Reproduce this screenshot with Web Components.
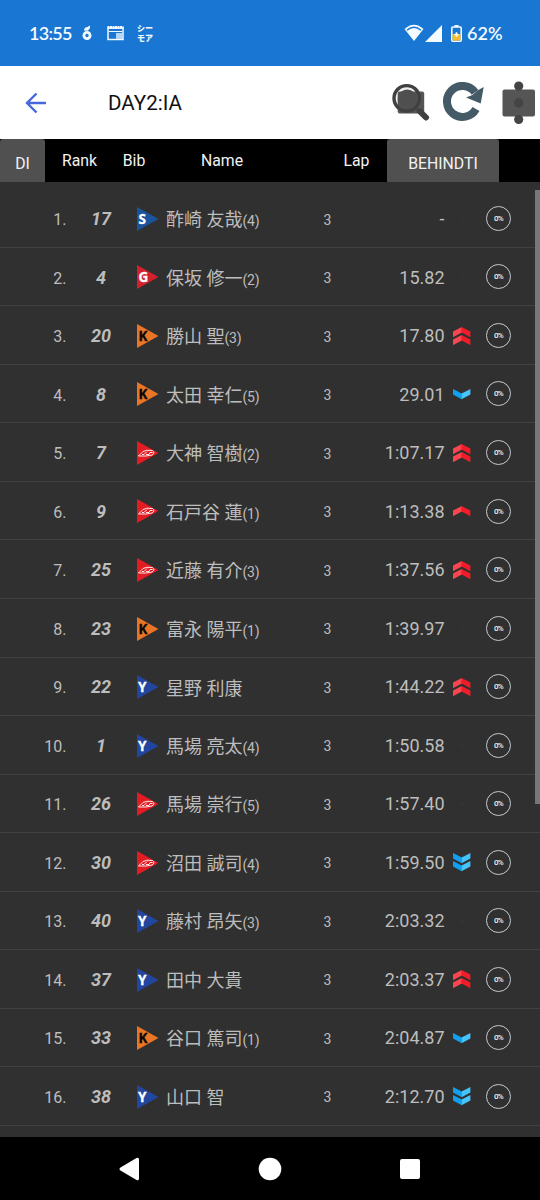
<!DOCTYPE html>
<html lang="ja">
<head>
<meta charset="utf-8">
<title>DAY2:IA</title>
<style>
    body {
        margin: 0;
        width: 540px;
        height: 1200px;
        overflow: hidden;
        background: #303030;
        font-family: Roboto, "Noto Sans CJK JP", sans-serif;
    }
</style>
</head>
<body>
<live-app></live-app>

<script>
class StatusBar extends HTMLElement {
    constructor() {
        super();
        this.shadow = this.attachShadow({mode: 'open'});
    }

    connectedCallback() {
        this.shadow.innerHTML = `
            <style>
                :host {
                    display: flex;
                    align-items: center;
                    justify-content: space-between;
                    box-sizing: border-box;
                    height: 66px;
                    padding: 0 37px 0 29px;
                    background: #1976d2;
                    color: #f4faff;
                    font-family: Lato, sans-serif;
                    font-weight: 600;
                }

                .group {
                    display: flex;
                    align-items: center;
                }

                .time {
                    font-size: 18px;
                    width: 53px;
                    letter-spacing: -0.7px;
                }

                .app {
                    display: flex;
                    flex-direction: column;
                    font: 900 8px/10px "Noto Sans CJK JP", sans-serif;
                    margin-left: 13px;
                }

                .percent {
                    font-size: 18px;
                    margin-left: 5px;
                    width: 36px;
                    white-space: nowrap;
                }

                svg {
                    display: block;
                }
            </style>

            <span class="group">
                <span class="time">13:55</span>
                <svg width="10" height="16" viewBox="0 0 10 16">
                    <circle cx="5" cy="10.500" r="3.100" fill="none" stroke="currentColor" stroke-width="2.800"/>
                    <path d="M2 5.500Q2.500 2 5 2.300L8 .500Q8.500 4 5.500 5.800Z" fill="currentColor"/>
                </svg>
                <svg width="17" height="16" viewBox="0 0 17 16" style="margin-left:15px">
                    <path d="M1 3H16V14.500H1Z" fill="none" stroke="currentColor" stroke-width="1.500"/>
                    <path d="M.500 2.500H16.500" stroke="currentColor" stroke-width="3" stroke-dasharray="2 .5"/>
                    <path d="M2 6.500H15" stroke="currentColor"/>
                    <path d="M9 8H15V14H9Z" fill="#b5d5f4"/>
                </svg>
                <span class="app"><span>シー</span><span>モア</span></span>
            </span>

            <span class="group">
                <svg width="20" height="18" viewBox="0 0 20 18">
                    <path d="M.500 5 Q10 -3.500 19.500 5 L10 17Z" fill="currentColor"/>
                    <path d="M3 6.200 Q10 .300 17 6.200" fill="none" stroke="#1976d2" stroke-width="1.400"/>
                </svg>
                <svg width="17" height="17" viewBox="0 0 17 17" style="margin-left:1px">
                    <path d="M0 17L17 0V17Z" fill="currentColor"/>
                </svg>
                <svg width="11" height="17" viewBox="0 0 11 17" style="margin-left:9px">
                    <path d="M3.500 0H7.500V2H3.500Z" fill="currentColor"/>
                    <rect x=".8" y="2" width="9.400" height="14.200" rx="1" fill="#1976d2" stroke="currentColor" stroke-width="1.600"/>
                    <path d="M1.500 9H9.500V15.500H1.500Z" fill="#fbbc2c"/>
                    <path d="M5.500 7.300V11.700M3.500 9.500H7.500" stroke="#fff" stroke-width="1.600"/>
                </svg>
                <span class="percent">62%</span>
            </span>
        `;
    }
}

class TitleBar extends HTMLElement {
    constructor() {
        super();
        this.shadow = this.attachShadow({mode: 'open'});
    }

    connectedCallback() {
        this.shadow.innerHTML = `
            <style>
                :host {
                    display: grid;
                    grid-template-columns: 83px 284px 38px 13px 42px 17px 34px;
                    align-items: center;
                    box-sizing: border-box;
                    height: 73px;
                    padding-left: 25px;
                    background: #fff;
                    color: #111;
                }

                .title {
                    font-size: 20.6px;
                    padding-top: 1px;
                }

                svg {
                    display: block;
                }
            </style>

            <svg width="22" height="22" viewBox="0 0 22 22" fill="none" stroke="#4569dc" stroke-width="2.400">
                <path d="M21 11H2M11.500 1.500L2 11L11.500 20.500"/>
            </svg>
            <span class="title"><slot></slot></span>
            <svg width="38" height="40" viewBox="0 0 38 40">
                <circle cx="14.700" cy="15.300" r="13" fill="#eee"/>
                <rect x="5.700" y="8.500" width="26.500" height="22" rx="2" fill="#555"/>
                <circle cx="15.200" cy="16" r="9.500" fill="#4f4f4f"/>
                <circle cx="14.700" cy="15.300" r="12.700" fill="none" stroke="#404040" stroke-width="3.400"/>
                <path d="M25 26L27 28" stroke="#404040" stroke-width="3"/>
                <path d="M28 28.500L34 34.500" stroke="#404040" stroke-width="6" stroke-linecap="round"/>
            </svg>
            <span></span>
            <svg width="42" height="42" viewBox="0 0 42 42">
                <path d="M32 10.300A15.500 15.500 0 1 0 33 27" fill="none" stroke="#445a66" stroke-width="8"/>
                <path d="M40.700 5L37.700 21.500L23 15.500L29.500 13L34.500 8.500Z" fill="#445a66"/>
            </svg>
            <span></span>
            <svg width="34" height="44" viewBox="0 0 34 44">
                <rect x=".5" y="8.500" width="32.500" height="27" rx="2" fill="#555"/>
                <g fill="#444">
                    <circle cx="16.700" cy="5" r="4.600"/>
                    <circle cx="16.700" cy="22" r="4.700"/>
                    <circle cx="16.700" cy="38.500" r="4.600"/>
                </g>
            </svg>
        `;
    }
}

class TableHead extends HTMLElement {
    constructor() {
        super();
        this.shadow = this.attachShadow({mode: 'open'});
    }

    connectedCallback() {
        this.shadow.innerHTML = `
            <style>
                :host {
                    display: grid;
                    grid-template-columns: 45px 69px 40px 136px 97px 112px;
                    height: 42.5px;
                    background: #000;
                    color: #f2f2f2;
                    font-size: 15.8px;
                    line-height: 44px;
                    text-align: center;
                }

                .button {
                    background: #505050;
                    border-radius: 3px;
                    line-height: 49px;
                }

                .lap {
                    text-align: right;
                    padding-right: 17.5px;
                }
            </style>

            <span class="button">DI</span>
            <span>Rank</span>
            <span>Bib</span>
            <span>Name</span>
            <span class="lap">Lap</span>
            <span class="button">BEHINDTI</span>
        `;
    }
}

class TeamFlag extends HTMLElement {
    constructor() {
        super();
        this.shadow = this.attachShadow({mode: 'open'});
    }

    connectedCallback() {
        const team = this.getAttribute("team");
        const colors = {S: "#1a549f", G: "#d3202c", K: "#ea7526", Y: "#2246a0", D: "#e31b23"};
        const label = team === "D"
            ? `<g fill="none" stroke="#fff" stroke-width=".9">
                    <path d="M1.500 15L6 10.500Q9 8.500 15.500 9.500Q18.500 12 15 14Q10 15.500 1.500 15Z"/>
                    <path d="M5 13.500H7L10 10.500M9 13.500H12L13 11.500H15.500"/>
                </g>`
            : `<text x="${team === "Y" ? 1 : 1.6}" y="16.700">${team}</text>`;

        this.shadow.innerHTML = `
            <style>
                :host {
                    display: block;
                }

                svg {
                    display: block;
                }

                text {
                    font: normal 700 13.5px "Noto Sans", sans-serif;
                    fill: ${team === "K" ? "#080808" : "#fff"};
                    stroke: ${team === "K" ? "#080808" : "#fff"};
                    stroke-width: 0.3px;
                }
            </style>

            <svg width="22" height="24" viewBox="0 0 22 24">
                <path d="M0 0L21.500 12L0 24Z" fill="${colors[team]}"/>
                ${label}
            </svg>
        `;
    }
}

class TrendMark extends HTMLElement {
    constructor() {
        super();
        this.shadow = this.attachShadow({mode: 'open'});
    }

    // positive = places gained, negative = places lost
    connectedCallback() {
        const trend = Number(this.getAttribute("value"));
        const count = Math.abs(trend);
        const height = count === 2 ? 18.5 : 10.5;
        let marks = "";

        for (let i = 0; i < count; i++) {
            const y = i * 8;
            marks += trend > 0
                ? `<path d="M0 ${y + 4.6}L8.800 ${y}V${y + 5.6}L0 ${y + 10.2}Z" fill="#fb4650"/>
                   <path d="M8.600 ${y}L17.400 ${y + 4.6}V${y + 10.2}L8.600 ${y + 5.6}Z" fill="#ef1c2a"/>`
                : `<path d="M0 ${y}L8.800 ${y + 4.6}V${y + 10.2}L0 ${y + 5.6}Z" fill="#12a0ee"/>
                   <path d="M8.600 ${y + 4.6}L17.400 ${y}V${y + 5.6}L8.600 ${y + 10.2}Z" fill="#45c3fa"/>`;
        }

        this.shadow.innerHTML = `
            <style>
                :host {
                    display: block;
                }

                svg {
                    display: block;
                }
            </style>

            ${count
                ? `<svg width="18" height="${height}" viewBox="0 0 18 ${height}">${marks}</svg>`
                : `<svg width="18" height="4" viewBox="0 0 18 4"><path d="M8 2H10" stroke="#3d3d3d"/></svg>`}
        `;
    }
}

class RankRow extends HTMLElement {
    constructor() {
        super();
        this.shadow = this.attachShadow({mode: 'open'});
    }

    connectedCallback() {
        const grade = this.getAttribute("grade");

        this.shadow.innerHTML = `
            <style>
                :host {
                    display: grid;
                    grid-template-columns: 66.5px 69px 30.5px 142px 39px 97.5px 41.5px 25px;
                    align-items: center;
                    box-sizing: border-box;
                    height: 58.53px;
                    border-bottom: 1px solid #404040;
                    color: #bdbdbd;
                    font-size: 18px;
                    line-height: 24px;
                    white-space: nowrap;
                }

                .rank {
                    font-size: 16px;
                    text-align: right;
                    padding-top: 4px;
                }

                .bib {
                    font-weight: 700;
                    font-style: italic;
                    text-align: center;
                    padding-top: 2px;
                }

                .flag {
                    padding: 1.5px 0 0 1.5px;
                }

                .grade {
                    font-size: 14px;
                    letter-spacing: -0.2px;
                }

                .name {
                    padding-top: 5px;
                }

                .lap {
                    font-size: 14px;
                    text-align: center;
                    padding-top: 3px;
                }

                .behind {
                    text-align: right;
                    padding-top: 2px;
                }

                .trend {
                    padding: 1.5px 0 0 8.5px;
                }

                .progress {
                    box-sizing: border-box;
                    width: 25px;
                    height: 25px;
                    margin-top: 0.6px;
                    border: 1px solid #c4cad0;
                    border-radius: 50%;
                    color: #f2f2f2;
                    font-size: 8px;
                    font-weight: 500;
                    letter-spacing: -0.6px;
                    line-height: 24px;
                    text-align: center;
                }
            </style>

            <span class="rank">${this.getAttribute("rank")}.</span>
            <span class="bib">${this.getAttribute("bib")}</span>
            <span class="flag"><team-flag team="${this.getAttribute("team")}"></team-flag></span>
            <span class="name"><slot></slot>${grade ? `<span class="grade">(${grade})</span>` : ""}</span>
            <span class="lap">3</span>
            <span class="behind">${this.getAttribute("behind")}</span>
            <span class="trend"><trend-mark value="${this.getAttribute("trend")}"></trend-mark></span>
            <span class="progress">0%</span>
        `;
    }
}

class NavBar extends HTMLElement {
    constructor() {
        super();
        this.shadow = this.attachShadow({mode: 'open'});
    }

    connectedCallback() {
        this.shadow.innerHTML = `
            <style>
                :host {
                    display: flex;
                    align-items: center;
                    justify-content: space-between;
                    box-sizing: border-box;
                    height: 63px;
                    padding: 0 119px 0 118px;
                    background: #000;
                }

                svg {
                    display: block;
                    fill: #fff;
                }

                .home {
                    margin-right: 2px;
                }
            </style>

            <svg width="24" height="24" viewBox="0 0 24 24">
                <path d="M18.500 1.100Q21 0 21 2.500V21.500Q21 24 18.500 22.900L2.500 13.600Q.500 12 2.500 10.400Z"/>
            </svg>
            <svg class="home" width="24" height="24" viewBox="0 0 24 24"><circle cx="12" cy="12" r="11.300"/></svg>
            <svg width="22" height="22" viewBox="0 0 22 22"><rect x="1" y="1" width="20" height="20" rx="2"/></svg>
        `;
    }
}

const racers = [
    [17, "S", "酢崎 友哉", 4, "-", 0],
    [4, "G", "保坂 修一", 2, "15.82", 0],
    [20, "K", "勝山 聖", 3, "17.80", 2],
    [8, "K", "太田 幸仁", 5, "29.01", -1],
    [7, "D", "大神 智樹", 2, "1:07.17", 2],
    [9, "D", "石戸谷 蓮", 1, "1:13.38", 1],
    [25, "D", "近藤 有介", 3, "1:37.56", 2],
    [23, "K", "富永 陽平", 1, "1:39.97", 0],
    [22, "Y", "星野 利康", "", "1:44.22", 2],
    [1, "Y", "馬場 亮太", 4, "1:50.58", 0],
    [26, "D", "馬場 崇行", 5, "1:57.40", 0],
    [30, "D", "沼田 誠司", 4, "1:59.50", -2],
    [40, "Y", "藤村 昂矢", 3, "2:03.32", 0],
    [37, "Y", "田中 大貴", "", "2:03.37", 2],
    [33, "K", "谷口 篤司", 1, "2:04.87", -1],
    [38, "Y", "山口 智", "", "2:12.70", -2]
];

class LiveApp extends HTMLElement {
    constructor() {
        super();
        this.shadow = this.attachShadow({mode: 'open'});
    }

    connectedCallback() {
        const rows = racers.map(([bib, team, name, grade, behind, trend], i) =>
            `<rank-row rank="${i + 1}" bib="${bib}" team="${team}" grade="${grade}" behind="${behind}" trend="${trend}">${name}</rank-row>`
        ).join("");

        this.shadow.innerHTML = `
            <style>
                :host {
                    display: flex;
                    flex-direction: column;
                    height: 1200px;
                }

                .list {
                    position: relative;
                    flex: 1;
                    min-height: 0;
                    overflow: hidden;
                    padding-top: 7.9px;
                    background: #303030;
                }

                .thumb {
                    position: absolute;
                    top: 8px;
                    right: 0;
                    width: 5.5px;
                    height: 614px;
                    background: #777;
                }
            </style>

            <status-bar></status-bar>
            <title-bar>DAY2:IA</title-bar>
            <table-head></table-head>
            <div class="list">
                ${rows}
                <div class="thumb"></div>
            </div>
            <nav-bar></nav-bar>
        `;
    }
}

customElements.define("status-bar", StatusBar);
customElements.define("title-bar", TitleBar);
customElements.define("table-head", TableHead);
customElements.define("team-flag", TeamFlag);
customElements.define("trend-mark", TrendMark);
customElements.define("rank-row", RankRow);
customElements.define("nav-bar", NavBar);
customElements.define("live-app", LiveApp);
</script>
</body>
</html>
